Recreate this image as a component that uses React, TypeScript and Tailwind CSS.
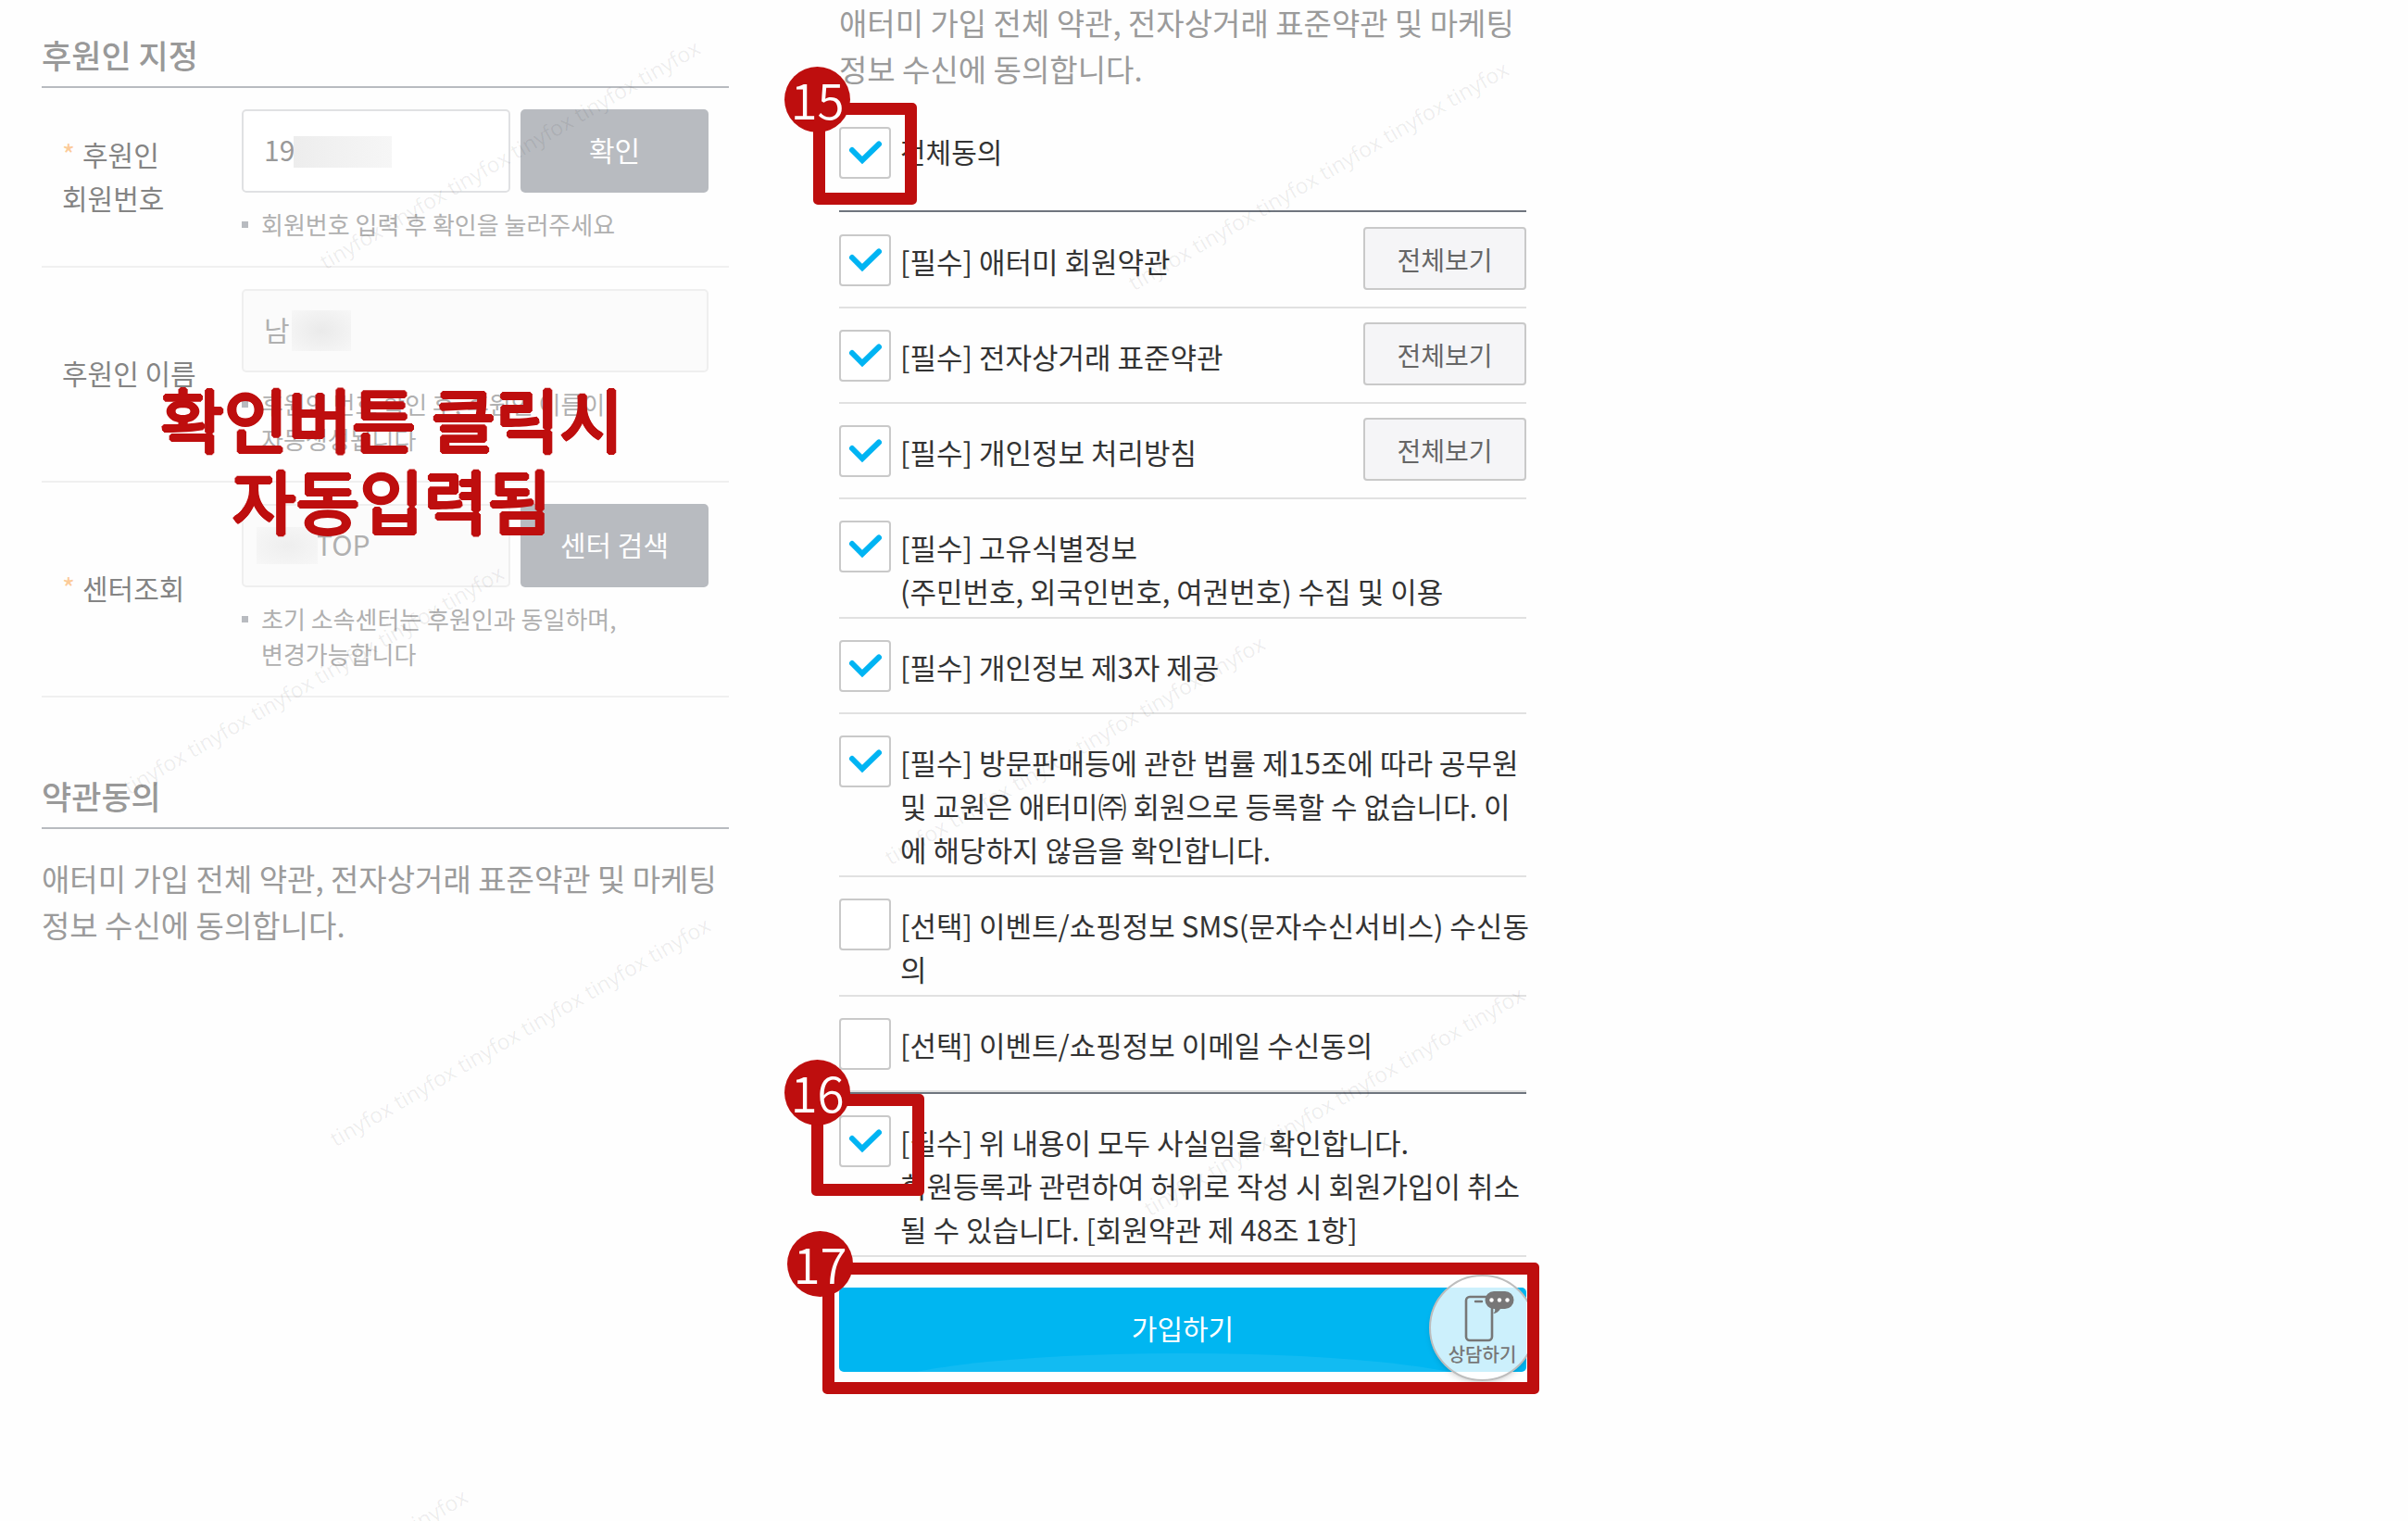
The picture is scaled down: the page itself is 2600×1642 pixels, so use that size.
import React, { useState } from 'react';

interface CheckBoxProps {
  id: string;
  checked: boolean;
  onChange: () => void;
}

interface Term {
  id: string;
  text: string;
  hasDetail?: boolean;
}

const TERMS: Term[] = [
  { id: 'member', text: '[필수] 애터미 회원약관', hasDetail: true },
  { id: 'commerce', text: '[필수] 전자상거래 표준약관', hasDetail: true },
  { id: 'privacy', text: '[필수] 개인정보 처리방침', hasDetail: true },
  { id: 'unique', text: '[필수] 고유식별정보\n(주민번호, 외국인번호, 여권번호) 수집 및 이용' },
  { id: 'third', text: '[필수] 개인정보 제3자 제공' },
  {
    id: 'law',
    text: '[필수] 방문판매등에 관한 법률 제15조에 따라 공무원\n및 교원은 애터미㈜ 회원으로 등록할 수 없습니다. 이\n에 해당하지 않음을 확인합니다.',
  },
  { id: 'sms', text: '[선택] 이벤트/쇼핑정보 SMS(문자수신서비스) 수신동\n의' },
  { id: 'email', text: '[선택] 이벤트/쇼핑정보 이메일 수신동의' },
];

const CONFIRM_TEXT =
  '[필수] 위 내용이 모두 사실임을 확인합니다.\n회원등록과 관련하여 허위로 작성 시 회원가입이 취소\n될 수 있습니다. [회원약관 제 48조 1항]';

const INTRO = '애터미 가입 전체 약관, 전자상거래 표준약관 및 마케팅\n정보 수신에 동의합니다.';

const WATERMARKS = [
  'left-[353px] top-[270px]',
  'left-[141px] top-[837px]',
  'left-[364px] top-[1217px]',
  'left-[102px] top-[1834px]',
  'left-[1226px] top-[293px]',
  'left-[963px] top-[913px]',
  'left-[1243px] top-[1292px]',
];

const CheckBox: React.FC<CheckBoxProps> = ({ id, checked, onChange }) => (
  <span className="relative block size-[56px] shrink-0">
    <input
      id={id}
      type="checkbox"
      checked={checked}
      onChange={onChange}
      className="peer block size-full appearance-none rounded-[4px] border-2 border-[#c9c9c9] bg-white"
    />
    <svg
      viewBox="0 0 56 56"
      className="pointer-events-none absolute inset-0 hidden size-full peer-checked:block"
      fill="none"
      stroke="#00b4f3"
      strokeWidth="6"
      strokeLinecap="round"
    >
      <path d="M14 25 L25 36 L43 18.500" />
    </svg>
  </span>
);

const StepBadge: React.FC<{ step: number; className: string }> = ({ step, className }) => (
  <span
    className={`absolute z-20 flex size-[71px] items-center justify-center rounded-full bg-[#be0e0e] pb-[3px] text-[53px] leading-none font-[350] text-white ${className}`}
  >
    {step}
  </span>
);

const StepFrame: React.FC<{ className: string }> = ({ className }) => (
  <span
    className={`pointer-events-none absolute z-10 rounded-[5px] border-[13px] border-[#be0e0e] ${className}`}
  />
);

const Hint: React.FC<{ text: string }> = ({ text }) => (
  <p className="mt-[15px] flex gap-[14px] text-[26px] leading-[38px] whitespace-pre-line text-[#b0b0b0]">
    <span className="mt-4 size-[7px] shrink-0 bg-[#b8bbc0]" />
    {text}
  </p>
);

const SectionTitle: React.FC<{ children: React.ReactNode }> = ({ children }) => (
  <h2 className="border-b-2 border-[#b8bbc0] pb-[10px] text-[35px] leading-[48px] font-medium text-[#999]">
    {children}
  </h2>
);

const FieldRow: React.FC<{
  id: string;
  label: string;
  required?: boolean;
  children: React.ReactNode;
}> = ({ id, label, required, children }) => (
  <div className="flex items-center border-b-2 border-[#f0f0f0] pt-[23px] pr-[22px] pb-[26px] pl-[22px]">
    <label
      htmlFor={id}
      className="w-[194px] shrink-0 text-[30px] leading-[47px] whitespace-pre-line text-[#848484]"
    >
      {required && <span className="mr-2 text-[#fccb98]">*</span>}
      {label}
    </label>
    <div className="min-w-0 flex-1">{children}</div>
  </div>
);

const GrayButton: React.FC<{ children: React.ReactNode }> = ({ children }) => (
  <button
    type="button"
    className="h-[90px] w-[203px] shrink-0 rounded-[5px] bg-[#b8bbc0] pb-1 text-[30px] text-white"
  >
    {children}
  </button>
);

const App: React.FC = () => {
  const [agreed, setAgreed] = useState<Record<string, boolean>>({
    all: true,
    member: true,
    commerce: true,
    privacy: true,
    unique: true,
    third: true,
    law: true,
    sms: false,
    email: false,
    confirm: true,
  });

  const toggle = (id: string) => setAgreed((prev) => ({ ...prev, [id]: !prev[id] }));

  return (
    <main className="relative grid h-screen grid-cols-3 gap-x-[29px] overflow-hidden bg-[#fefefe] pr-[46px] font-['Noto_Sans_CJK_KR',sans-serif]">
      {/* Sponsor */}
      <section className="relative px-[45px] pt-[35px]">
        <SectionTitle>후원인 지정</SectionTitle>

        <FieldRow id="sponsorNo" label={'후원인\n회원번호'} required>
          <div className="flex gap-[11px]">
            <div className="relative min-w-0 flex-1">
              <input
                id="sponsorNo"
                defaultValue="19"
                className="h-[90px] w-full rounded-[5px] border-2 border-[#e0e1e3] bg-white px-[22px] pb-1 text-[30px] text-[#999]"
              />
              <span className="absolute top-[29px] left-[56px] h-[34px] w-[106px] bg-linear-to-r from-[#ededed] to-[#f6f6f6]" />
            </div>
            <GrayButton>확인</GrayButton>
          </div>
          <Hint text="회원번호 입력 후 확인을 눌러주세요" />
        </FieldRow>

        <FieldRow id="sponsorName" label="후원인 이름">
          <div className="relative">
            <input
              id="sponsorName"
              readOnly
              defaultValue="남"
              className="h-[90px] w-full rounded-[5px] border-2 border-[#efefef] bg-[#fbfbfb] px-[22px] pb-1 text-[30px] text-[#b0b0b0]"
            />
            <span className="absolute top-[23px] left-[54px] h-[44px] w-[64px] bg-radial from-[#eaeaea] to-[#f7f7f7]" />
          </div>
          <Hint text={'후원인 번호 확인 후, 후원인 이름이\n자동생성됩니다'} />
        </FieldRow>

        <FieldRow id="center" label="센터조회" required>
          <div className="flex gap-[11px]">
            <div className="relative min-w-0 flex-1">
              <input
                id="center"
                readOnly
                defaultValue="TOP"
                className="h-[90px] w-full rounded-[5px] border-2 border-[#efefef] bg-[#fbfbfb] pr-6 pb-1 pl-[78px] text-[30px] text-[#b0b0b0]"
              />
              <span className="absolute top-[25px] left-4 h-10 w-[66px] bg-radial from-[#eeeeee] to-[#f7f7f7]" />
            </div>
            <GrayButton>센터 검색</GrayButton>
          </div>
          <Hint text={'초기 소속센터는 후원인과 동일하며,\n변경가능합니다'} />
        </FieldRow>

        <div className="mt-[82px]">
          <SectionTitle>약관동의</SectionTitle>
          <p className="mt-7 text-[33px] leading-[50px] whitespace-pre-line text-[#9b9b9b]">{INTRO}</p>
        </div>

        <p className="pointer-events-none absolute inset-x-0 top-[407px] pl-[14px] text-center text-[75px] leading-[88px] whitespace-pre-line text-[#be0e0e] [text-shadow:2px_0_#be0e0e,-2px_0_#be0e0e,0_2px_#be0e0e,0_-2px_#be0e0e,1px_1px_#be0e0e,-1px_1px_#be0e0e,1px_-1px_#be0e0e,-1px_-1px_#be0e0e]">
          {'확인버튼 클릭시\n자동입력됨'}
        </p>
      </section>

      {/* Terms */}
      <section className="px-[45px]">
        <p className="-mt-px text-[33px] leading-[50px] whitespace-pre-line text-[#9b9b9b]">{INTRO}</p>

        <div className="flex items-start gap-[10px] border-b-2 border-[#6f757e] pt-[38px] pb-[34px]">
          <div className="relative">
            <CheckBox id="all" checked={agreed.all} onChange={() => toggle('all')} />
            <StepFrame className="-top-[26px] -left-[28px] h-[110px] w-[112px]" />
            <StepBadge step={15} className="-top-[65px] -left-[59px]" />
          </div>
          <label htmlFor="all" className="text-[30px] leading-[52px] text-[#333]">
            전체동의
          </label>
        </div>

        <ul className="pt-px">
          {TERMS.map(({ id, text, hasDetail }) => (
            <li key={id} className="flex min-h-[103px] items-start border-b-2 border-[#e1e1e1]">
              <div className="mt-[23px]">
                <CheckBox id={id} checked={agreed[id]} onChange={() => toggle(id)} />
              </div>
              <label
                htmlFor={id}
                className="min-w-0 flex-1 pt-7 pb-[5px] pl-[10px] text-[31px] leading-[47px] whitespace-pre text-[#333]"
              >
                {text}
              </label>
              {hasDetail && (
                <button
                  type="button"
                  className="mt-[15px] h-[68px] w-[176px] shrink-0 rounded-[4px] border-2 border-[#c9c9c9] bg-[#f5f5f7] pt-0.5 text-[28px] text-[#666]"
                >
                  전체보기
                </button>
              )}
            </li>
          ))}
        </ul>

        <div className="flex items-start border-t-2 border-b-2 border-t-[#6f757e] border-b-[#e1e1e1]">
          <div className="relative mt-[23px]">
            <CheckBox id="confirm" checked={agreed.confirm} onChange={() => toggle('confirm')} />
            <StepFrame className="-top-[23px] -left-[30px] h-[110px] w-[122px]" />
            <StepBadge step={16} className="-top-[60px] -left-[59px]" />
          </div>
          <label
            htmlFor="confirm"
            className="min-w-0 flex-1 pt-7 pb-[5px] pl-[10px] text-[31px] leading-[47px] whitespace-pre text-[#333]"
          >
            {CONFIRM_TEXT}
          </label>
        </div>

        <div className="relative mt-[33px]">
          <button
            type="submit"
            className="relative block h-[91px] w-full overflow-hidden rounded-[5px] bg-[#00b6f1] pb-1 text-[30px] text-white"
          >
            <span className="absolute inset-x-10 top-[71px] h-[80px] rounded-[50%] bg-white/7" />
            가입하기
          </button>

          {/* Floating consult button */}
          <button
            type="button"
            className="absolute -top-[14px] -right-[10px] flex size-[115px] flex-col items-center rounded-full border-2 border-[#bdbdbd] bg-white/80 pt-[14px] text-[20px] leading-6 font-medium text-[#777] shadow-md"
          >
            <svg viewBox="0 0 70 58" className="h-[58px] w-[70px]" fill="none">
              <rect x="17" y="8" width="28" height="47" rx="4" stroke="#777" strokeWidth="2.600" />
              <path d="M27 13h7" stroke="#777" strokeWidth="2.400" strokeLinecap="round" />
              <path
                d="M47 2h12a9.500 9.500 0 0 1 0 19h-5q-3 5-8 5q3-2 2-5h-1a9.500 9.500 0 0 1 0-19z"
                fill="#777"
              />
              <circle cx="44.500" cy="11.500" r="2.200" fill="#fff" />
              <circle cx="53" cy="11.500" r="2.200" fill="#fff" />
              <circle cx="61.500" cy="11.500" r="2.200" fill="#fff" />
            </svg>
            상담하기
          </button>

          <StepFrame className="-top-[27px] -right-[14px] -bottom-[24px] -left-[18px]" />
          <StepBadge step={17} className="-top-[61px] -left-[56px]" />
        </div>
      </section>

      {/* Watermarks */}
      {WATERMARKS.map((pos) => (
        <span
          key={pos}
          aria-hidden="true"
          className={`pointer-events-none absolute origin-bottom-left -rotate-30 font-['Open_Sans',sans-serif] text-[23px] leading-6 whitespace-nowrap text-black/8 ${pos}`}
        >
          tinyfox tinyfox tinyfox tinyfox tinyfox tinyfox
        </span>
      ))}
    </main>
  );
};

export default App;
